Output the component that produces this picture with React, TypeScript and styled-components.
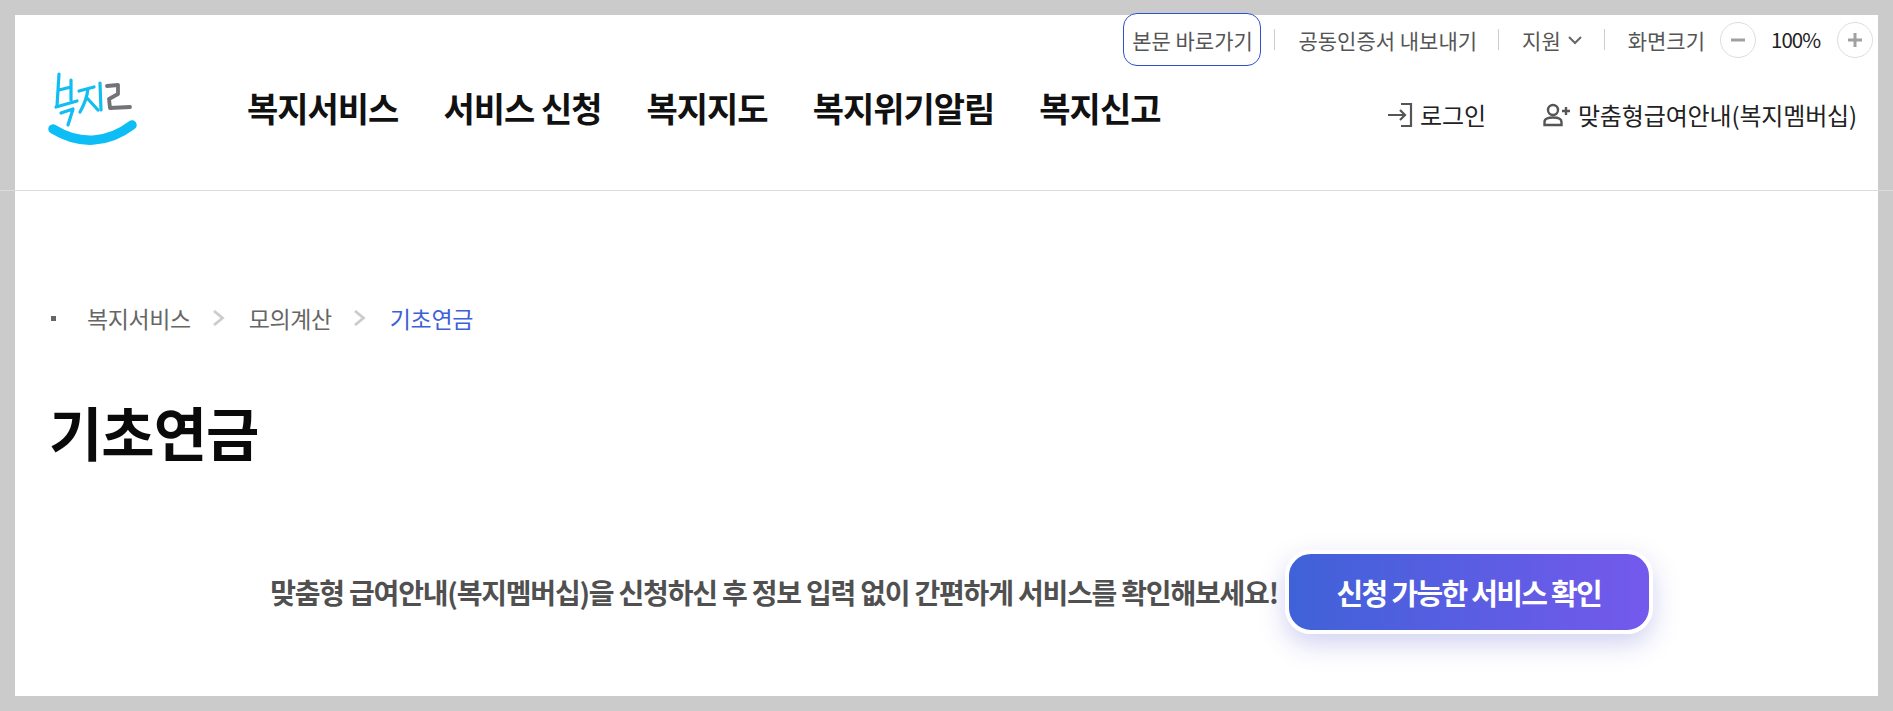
import styled, { createGlobalStyle } from 'styled-components'

const GlobalStyle = createGlobalStyle`
  html, body {
    margin: 0;
    padding: 0;
    height: 100%;
    overflow: hidden;
  }
  body {
    background: #cbcbcb;
    font-family: "Noto Sans CJK KR", "Noto Sans", sans-serif;
  }
  * {
    box-sizing: border-box;
  }
`

const Page = styled.div`
  height: 711px;
  padding: 15px;
  background: #cbcbcb;
`

const Sheet = styled.div`
  height: 681px;
  background: #fff;
`

const Header = styled.header`
  display: flow-root;
  height: 176px;
  margin: 0 -15px;
  padding: 0 15px;
  border-bottom: 1px solid #dcdcdc;
`

const TopBar = styled.div`
  display: flex;
  align-items: center;
  justify-content: flex-end;
  height: 53px;
  margin-top: -2px;
  padding-right: 5px;
  font-size: 21px;
  color: #555;
`

const SkipLink = styled.a`
  display: flex;
  align-items: center;
  justify-content: center;
  width: 138px;
  height: 53px;
  border: 1px solid #2f50c8;
  border-radius: 14px;
  background: #fff;
  color: #555;
  white-space: nowrap;
`

const Separator = styled.span<{ $left: number; $right: number }>`
  width: 1px;
  height: 21px;
  margin: ${({ $left, $right }) => `0 ${$right}px 0 ${$left}px`};
  background: #ccc;
`

const TopItem = styled.span`
  display: flex;
  align-items: center;
  gap: 6px;
  white-space: nowrap;
`

const ZoomButton = styled.button`
  display: flex;
  align-items: center;
  justify-content: center;
  width: 36px;
  height: 36px;
  margin-left: 15px;
  padding: 0;
  border: 1px solid #ddd;
  border-radius: 50%;
  background: #fff;
`

const ZoomValue = styled.span`
  width: 51px;
  margin-left: 15px;
  padding-bottom: 2px;
  font-size: 20.5px;
  letter-spacing: -1px;
  white-space: nowrap;
  color: #222;
`

const MainRow = styled.div`
  display: flex;
  align-items: flex-start;
  padding: 0 21px 0 30px;
`

const Logo = styled.a`
  display: block;
  width: 100px;
  height: 85px;
  margin-top: -1px;
`

const Nav = styled.nav`
  display: flex;
  gap: 45px;
  margin: 17px 0 0 102px;
  font-size: 34px;
  font-weight: 700;
  letter-spacing: -1px;
  white-space: nowrap;
  color: #111;
`

const UserLinks = styled.div`
  display: flex;
  gap: 57px;
  margin: 31px 0 0 auto;
  font-size: 24px;
  letter-spacing: -0.15px;
  color: #222;
`

const UserLink = styled.a`
  display: flex;
  align-items: center;
  gap: 7px;
  white-space: nowrap;
`

const Main = styled.main`
  padding: 0 36px;
`

const Breadcrumb = styled.ol`
  display: flex;
  align-items: center;
  margin: 110px 0 0;
  padding: 0;
  list-style: none;
  font-size: 23px;
  letter-spacing: -0.4px;
  color: #666;
`

const Bullet = styled.li`
  width: 5px;
  height: 5px;
  margin-right: 31px;
  background: #666;
`

const Crumb = styled.li<{ $current?: boolean }>`
  color: ${({ $current }) => ($current ? '#3d5fd9' : '#666')};
`

const Chevron = styled.li`
  display: flex;
  margin: 0 22px 0 20px;
`

const Title = styled.h1`
  margin: 56px 0 0 -2px;
  font-size: 58px;
  line-height: 80px;
  font-weight: 700;
  letter-spacing: -1px;
  color: #0a0a0a;
`

const Promo = styled.div`
  display: flex;
  align-items: center;
  justify-content: center;
  gap: 7px;
  margin-top: 79px;
  padding-left: 30px;
`

const PromoText = styled.p`
  margin: 0;
  font-size: 28px;
  font-weight: 700;
  letter-spacing: -1.2px;
  color: #505050;
  white-space: nowrap;
`

const PromoButton = styled.button`
  flex-shrink: 0;
  width: 368px;
  height: 84px;
  border: 4px solid #fff;
  border-radius: 26px;
  background: linear-gradient(90deg, #3f62d8, #7459ec);
  box-shadow: 0 10px 26px rgba(90, 90, 210, 0.28);
  font-family: inherit;
  font-size: 29px;
  font-weight: 700;
  letter-spacing: -1.7px;
  color: #fff;
`

const LogoMark = () => (
  <svg width="100" height="85" viewBox="0 0 100 85" fill="none" strokeLinecap="round" strokeLinejoin="round">
    <g stroke="#12bdf2" strokeWidth="3.2">
      <path d="M14 9L12 41M26 15L26 35M14 25L26 22" />
      <path d="M11 42L32 36" />
      <path d="M16 48L28 44L23 60" />
      <path d="M34 26L49 22M43 24C42 32 39 40 35 47M42 33L53 45" />
      <path d="M55 18L56 45" />
    </g>
    <path d="M62 21L73 20L73 29L64 34L65 43L85 42" stroke="#737377" strokeWidth="3.8" />
    <path d="M8 64C34 80 62 79 87 60" stroke="#0dbdf6" strokeWidth="9.5" />
  </svg>
)

const LoginIcon = () => (
  <svg width="26" height="24" viewBox="0 0 26 24" fill="none" stroke="#555" strokeWidth="2.2">
    <path d="M1 12H18M13 7L18 12L13 17" />
    <path d="M14 1H24V23H14" />
  </svg>
)

const MemberIcon = () => (
  <svg width="28" height="24" viewBox="0 0 28 24" fill="none" stroke="#555" strokeWidth="2.4">
    <circle cx="10" cy="7" r="5" />
    <path d="M1.5 22V19C1.5 16 5 14.5 10 14.5C15 14.5 18.5 16 18.5 19V22Z" />
    <path d="M19 8H27M23 4V12" />
  </svg>
)

const ChevronIcon = () => (
  <svg width="16" height="16" viewBox="0 0 16 16" fill="none" stroke="#ccc" strokeWidth="2.8">
    <path d="M3 1L11.5 8L3 15" />
  </svg>
)

const DownIcon = () => (
  <svg width="16" height="10" viewBox="0 0 16 10" fill="none" stroke="#666" strokeWidth="2">
    <path d="M2 2L8 8L14 2" />
  </svg>
)

const ZoomIcon = ({ plus }: { plus?: boolean }) => (
  <svg width="16" height="16" viewBox="0 0 16 16" fill="none" stroke="#a0a0a0" strokeWidth="3">
    <path d={plus ? 'M1 8H15M8 1V15' : 'M1 8H15'} />
  </svg>
)

const navItems = ['복지서비스', '서비스 신청', '복지지도', '복지위기알림', '복지신고']

export default function App() {
  return (
    <Page>
      <GlobalStyle />
      <Sheet>
        <Header>
          <TopBar>
            <SkipLink>본문 바로가기</SkipLink>
            <Separator $left={13} $right={23} />
            <TopItem>공동인증서 내보내기</TopItem>
            <Separator $left={21} $right={23} />
            <TopItem>
              지원
              <DownIcon />
            </TopItem>
            <Separator $left={21} $right={23} />
            <TopItem>화면크기</TopItem>
            <ZoomButton aria-label="축소">
              <ZoomIcon />
            </ZoomButton>
            <ZoomValue>100%</ZoomValue>
            <ZoomButton aria-label="확대">
              <ZoomIcon plus />
            </ZoomButton>
          </TopBar>
          <MainRow>
            <Logo aria-label="복지로">
              <LogoMark />
            </Logo>
            <Nav>
              {navItems.map((item) => (
                <span key={item}>{item}</span>
              ))}
            </Nav>
            <UserLinks>
              <UserLink>
                <LoginIcon />
                로그인
              </UserLink>
              <UserLink>
                <MemberIcon />
                맞춤형급여안내(복지멤버십)
              </UserLink>
            </UserLinks>
          </MainRow>
        </Header>
        <Main>
          <Breadcrumb>
            <Bullet />
            <Crumb>복지서비스</Crumb>
            <Chevron>
              <ChevronIcon />
            </Chevron>
            <Crumb>모의계산</Crumb>
            <Chevron>
              <ChevronIcon />
            </Chevron>
            <Crumb $current>기초연금</Crumb>
          </Breadcrumb>
          <Title>기초연금</Title>
          <Promo>
            <PromoText>맞춤형 급여안내(복지멤버십)을 신청하신 후 정보 입력 없이 간편하게 서비스를 확인해보세요!</PromoText>
            <PromoButton>신청 가능한 서비스 확인</PromoButton>
          </Promo>
        </Main>
      </Sheet>
    </Page>
  )
}
